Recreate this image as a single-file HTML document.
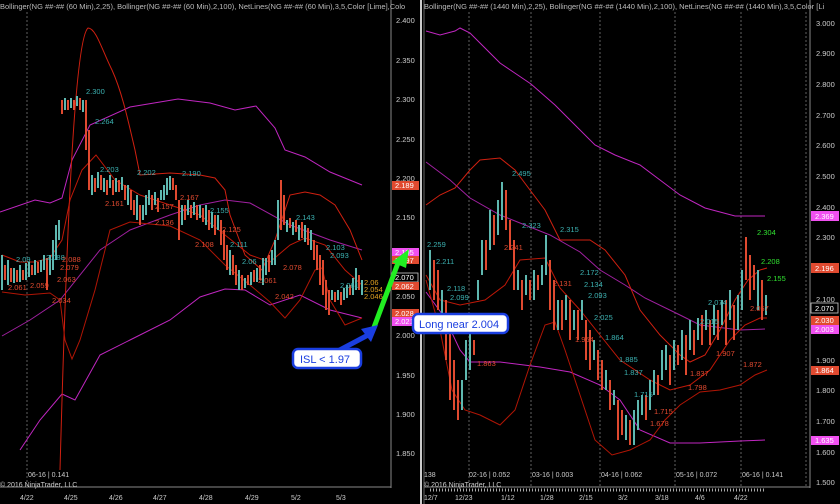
<!DOCTYPE html>
<html><head><meta charset="utf-8"><style>
html,body{margin:0;padding:0;background:#000;width:840px;height:504px;overflow:hidden}
svg{display:block}
text{font-family:"Liberation Sans",sans-serif}
</style></head><body>
<svg width="840" height="504" viewBox="0 0 840 504" xmlns="http://www.w3.org/2000/svg">
<rect width="840" height="504" fill="#000"/>
<text x="0" y="9" font-size="7.5" fill="#bbb">Bollinger(NG ##-## (60 Min),2,25), Bollinger(NG ##-## (60 Min),2,100), NetLines(NG ##-## (60 Min),3,5,Color [Lime],Colo</text>
<text x="424" y="9" font-size="7.5" fill="#bbb">Bollinger(NG ##-## (1440 Min),2,25), Bollinger(NG ##-## (1440 Min),2,100), NetLines(NG ##-## (1440 Min),3,5,Color [Li</text>
<g stroke="#777" stroke-dasharray="2,2" stroke-width="0.8">
<line x1="27" y1="12" x2="27" y2="486"/>
<line x1="469" y1="12" x2="469" y2="486"/><line x1="531" y1="12" x2="531" y2="486"/>
<line x1="600" y1="12" x2="600" y2="486"/><line x1="675" y1="12" x2="675" y2="486"/>
<line x1="741" y1="12" x2="741" y2="486"/><line x1="806" y1="12" x2="806" y2="486"/>
</g>
<g stroke="#888" stroke-width="1">
<line x1="391" y1="0" x2="391" y2="488"/><line x1="0" y1="487" x2="391" y2="487"/>
<line x1="810" y1="0" x2="810" y2="488"/><line x1="424" y1="487" x2="810" y2="487"/>
</g>
<line x1="421" y1="0" x2="421" y2="504" stroke="#ccc" stroke-width="2"/>
<line x1="424" y1="0" x2="424" y2="504" stroke="#666" stroke-width="1"/>
<g font-size="7.5" fill="#ccc">
<text x="396" y="23">2.400</text><text x="396" y="63">2.350</text><text x="396" y="102">2.300</text>
<text x="396" y="142">2.250</text><text x="396" y="181">2.200</text><text x="396" y="220">2.150</text>
<text x="396" y="299">2.050</text><text x="396" y="338">2.000</text><text x="396" y="378">1.950</text>
<text x="396" y="417">1.900</text><text x="396" y="456">1.850</text>
<text x="816" y="26">3.000</text><text x="816" y="56">2.900</text><text x="816" y="87">2.800</text>
<text x="816" y="118">2.700</text><text x="816" y="148">2.600</text><text x="816" y="179">2.500</text>
<text x="816" y="210">2.400</text><text x="816" y="240">2.300</text><text x="816" y="302">2.100</text>
<text x="816" y="363">1.900</text><text x="816" y="393">1.800</text><text x="816" y="424">1.700</text>
<text x="816" y="455">1.600</text><text x="816" y="485">1.500</text>
</g>
<g font-size="7" fill="#ccc">
<text x="20" y="500">4/22</text><text x="64" y="500">4/25</text><text x="109" y="500">4/26</text>
<text x="153" y="500">4/27</text><text x="199" y="500">4/28</text><text x="245" y="500">4/29</text>
<text x="291" y="500">5/2</text><text x="336" y="500">5/3</text>
<text x="424" y="500">12/7</text><text x="455" y="500">12/23</text><text x="501" y="500">1/12</text>
<text x="540" y="500">1/28</text><text x="579" y="500">2/15</text><text x="618" y="500">3/2</text>
<text x="655" y="500">3/18</text><text x="695" y="500">4/6</text><text x="734" y="500">4/22</text>
<text x="28" y="477">06-16 | 0.141</text><text x="0" y="487">© 2016 NinjaTrader, LLC</text>
<text x="424" y="477">138</text><text x="469" y="477">02-16 | 0.052</text><text x="532" y="477">03-16 | 0.003</text>
<text x="601" y="477">04-16 | 0.062</text><text x="676" y="477">05-16 | 0.072</text><text x="742" y="477">06-16 | 0.141</text>
<text x="424" y="487">© 2016 NinjaTrader, LLC</text>
</g>
<line x1="430" y1="490" x2="765" y2="490" stroke="#aaa" stroke-width="3" stroke-dasharray="1,2"/>
<!-- LEFT bands -->
<g fill="none" stroke-width="1">
<path d="M0,212 L35,200 L50,203 L62,198 L72,160 L90,125 L130,107 L178,99 L210,103 L235,110 L256,106 L275,128 L285,150 L305,157 L330,172 L362,185" stroke="#c026c0"/>
<path d="M2,336 L30,320 L60,300 L100,250 L130,230 L170,215 L200,205 L225,200 L250,203 L290,225 L330,240 L362,250" stroke="#a020a0"/>
<path d="M20,450 L40,420 L62,394 L75,400 L100,355 L130,340 L170,320 L200,297 L225,289 L245,290 L270,305 L300,295 L330,310 L362,318" stroke="#c026c0"/>
<path d="M60,470 C66,250 74,40 88,28 C96,28 102,50 112,70 C122,92 128,120 135,150 L140,175 L170,173 L200,175 L215,178 L225,190 L230,215 L245,255 L262,270 L275,240 L290,195 L305,192 L320,195 L335,205 L350,230 L362,260" stroke="#d02010"/>
<path d="M2,255 L20,262 L35,262 L50,258 L62,240 L70,200 L82,170 L96,155 L115,180 L140,195 L170,205 L200,215 L225,235 L250,255 L270,262 L290,245 L305,238 L325,245 L345,270 L362,285" stroke="#c01808"/>
<path d="M2,292 L25,295 L50,293 L60,300 L65,340 L72,359 L80,340 L95,290 L110,230 L130,222 L170,226 L200,240 L225,265 L250,285 L270,302 L285,318 L300,300 L315,270 L322,268 L330,300 L345,325 L362,318" stroke="#b01505"/>
</g>
<!-- LEFT candles -->
<g stroke-width="2">
<path stroke="#5fb8b0" d="M2,255v35M8,260v25M14,268v15M20,265v17M26,263v17M29,262v15M35,260v15M41,260v12M44,255v15M50,255v20M53,240v30M56,225v35M59,220v20M65,98v12M71,98v10M77,96v10M83,100v12M92,175v20M98,172v16M104,178v14M110,175v13M116,178v14M122,177v13M128,185v20M137,195v25M143,205v15M146,195v20M149,190v15M155,192v13M161,190v10M164,185v15M167,178v17M170,176v14M182,205v20M188,200v15M194,202v13M200,205v13M206,205v20M212,212v16M218,215v15M230,250v25M239,270v20M245,278v10M251,272v13M257,268v14M263,258v27M266,258v17M272,250v15M275,240v25M278,200v40M287,220v12M293,222v13M299,225v15M305,225v17M311,230v20M332,290v10M338,290v10M344,288v12M347,285v13M353,278v17M356,268v22M362,280v15"/>
<path stroke="#e04a30" d="M5,265v15M11,268v14M17,270v12M23,270v10M32,265v10M38,262v11M47,258v32M62,100v14M68,100v10M74,100v10M80,98v12M86,100v50M89,130v60M95,178v14M101,175v15M107,180v15M113,180v15M119,180v12M125,185v15M131,190v20M134,200v15M140,205v20M152,195v15M158,198v14M173,178v12M176,185v15M179,200v40M185,205v15M191,205v13M197,205v15M203,208v14M209,210v20M215,215v20M221,220v25M224,230v30M227,245v25M233,255v20M236,265v20M242,275v15M248,275v10M254,270v12M260,265v15M269,255v17M281,180v50M284,195v30M290,218v10M296,220v12M302,222v16M308,228v17M314,240v20M317,245v25M320,255v30M323,260v35M326,280v30M329,290v25M335,292v10M341,292v13M350,285v10M359,275v15"/>
</g>
<g font-size="7.5">
<g fill="#3bb0b0"><text x="86" y="94">2.300</text><text x="95" y="124">2.264</text><text x="100" y="172">2.203</text><text x="137" y="175">2.202</text><text x="182" y="176">2.190</text><text x="210" y="213">2.155</text><text x="230" y="247">2.111</text><text x="296" y="220">2.143</text><text x="326" y="250">2.103</text><text x="330" y="258">2.093</text><text x="16" y="262">2.09</text><text x="46" y="260">2.088</text><text x="242" y="264">2.06</text><text x="340" y="288">2.061</text></g>
<g fill="#e04a30"><text x="105" y="206">2.161</text><text x="195" y="247">2.108</text><text x="222" y="232">2.125</text><text x="283" y="270">2.078</text><text x="62" y="262">2.088</text><text x="60" y="270">2.079</text><text x="30" y="288">2.059</text><text x="52" y="303">2.034</text><text x="8" y="290">2.061</text><text x="57" y="282">2.063</text><text x="275" y="299">2.042</text><text x="258" y="283">2.061</text><text x="155" y="225">2.136</text><text x="155" y="209">2.157</text><text x="180" y="200">2.167</text></g>
<g fill="#e0a020"><text x="364" y="285">2.06</text><text x="364" y="292">2.054</text><text x="364" y="299">2.046</text></g>
</g>
<!-- RIGHT bands -->
<g fill="none" stroke-width="1">
<path d="M426,31 L440,35 L455,31 L460,28 L470,33 L485,48 L500,63 L531,84 L555,105 L575,125 L595,145 L615,155 L640,165 L660,180 L680,195 L705,208 L735,216 L765,216" stroke="#c026c0"/>
<path d="M426,162 L450,180 L470,198 L500,215 L550,235 L580,252 L600,270 L625,285 L645,298 L680,315 L700,325 L740,330 L765,329" stroke="#a020a0"/>
<path d="M426,292 L445,318 L460,350 L470,362 L500,362 L540,367 L570,372 L600,385 L620,400 L640,430 L670,443 L700,443 L740,441 L765,440" stroke="#c026c0"/>
<path d="M426,205 L440,195 L455,188 L470,170 L480,160 L500,158 L515,170 L530,190 L545,210 L560,240 L575,240 L590,240 L605,250 L625,275 L640,310 L660,335 L680,355 L690,362 L705,355 L720,330 L735,300 L748,280 L760,270 L767,268" stroke="#d02010"/>
<path d="M426,275 L440,300 L460,305 L485,300 L505,285 L520,260 L545,258 L560,288 L580,310 L600,335 L620,360 L650,380 L670,390 L690,385 L710,370 L730,340 L745,325 L760,318 L767,318" stroke="#c01808"/>
<path d="M426,280 L440,330 L452,390 L465,410 L480,415 L500,425 L515,410 L530,365 L545,325 L555,322 L565,350 L580,395 L595,440 L612,455 L630,450 L650,440 L665,420 L680,405 L700,392 L720,390 L740,385 L755,375 L767,370" stroke="#b01505"/>
</g>
<!-- RIGHT candles -->
<g stroke-width="2">
<path stroke="#5fb8b0" d="M430,250v40M442,290v40M462,380v30M466,340v40M470,330v40M478,280v20M482,240v35M490,210v40M498,200v35M502,182v38M518,270v20M526,275v20M534,270v30M542,265v20M546,235v40M558,300v30M566,295v25M574,310v20M582,300v20M594,340v20M606,370v20M614,390v15M626,415v25M634,410v35M638,400v30M642,395v20M650,380v30M654,370v25M662,350v30M666,345v25M674,340v30M682,330v30M690,320v30M698,318v22M706,310v20M714,305v30M722,300v25M730,290v30M738,295v35M742,270v40M758,270v40M766,295v20"/>
<path stroke="#e04a30" d="M434,260v40M438,270v40M446,300v60M450,330v70M454,360v50M458,380v40M474,340v15M486,240v30M494,215v30M506,190v40M510,220v30M514,240v50M522,280v30M530,280v20M538,275v15M550,260v50M554,280v50M562,300v30M570,300v40M578,310v30M586,320v40M590,330v40M598,350v30M602,360v30M610,380v30M618,400v40M622,410v25M630,420v25M646,395v25M658,375v20M670,355v30M678,345v20M686,335v40M694,330v25M702,315v30M710,320v25M718,310v30M726,300v45M734,305v35M746,237v43M750,255v45M754,265v25M762,280v40"/>
</g>
<g font-size="7.5">
<g fill="#3bb0b0"><text x="512" y="176">2.495</text><text x="427" y="247">2.259</text><text x="436" y="264">2.211</text><text x="560" y="232">2.315</text><text x="522" y="228">2.323</text><text x="580" y="275">2.172</text><text x="584" y="287">2.134</text><text x="588" y="298">2.093</text><text x="594" y="320">2.025</text><text x="708" y="305">2.074</text><text x="447" y="291">2.118</text><text x="450" y="300">2.099</text><text x="619" y="362">1.885</text><text x="624" y="375">1.837</text><text x="700" y="324">2.015</text><text x="605" y="340">1.864</text><text x="634" y="397">1.715</text></g>
<g fill="#e04a30"><text x="553" y="286">2.131</text><text x="504" y="250">2.241</text><text x="575" y="342">1.954</text><text x="716" y="356">1.907</text><text x="654" y="414">1.715</text><text x="650" y="426">1.678</text><text x="743" y="367">1.872</text><text x="690" y="376">1.837</text><text x="688" y="390">1.798</text><text x="750" y="311">2.057</text><text x="477" y="366">1.863</text></g>
<g fill="#30e030"><text x="757" y="235">2.304</text><text x="761" y="264">2.208</text><text x="767" y="281">2.155</text></g>
</g>
<!-- axis tags -->
<g font-size="7.5">
<rect x="392" y="181" width="27" height="9" fill="#e04a30"/><text x="395" y="188" fill="#fff">2.189</text>
<rect x="392" y="248" width="27" height="9" fill="#f050f0"/><text x="395" y="255" fill="#fff">2.105</text>
<rect x="392" y="256" width="27" height="8" fill="#e04a30"/><text x="395" y="263" fill="#fff">2.097</text>
<rect x="392" y="273" width="26" height="9" fill="#000" stroke="#ccc" stroke-width="0.8"/><text x="395" y="280" fill="#fff">2.070</text>
<rect x="392" y="282" width="27" height="8" fill="#e04a30"/><text x="395" y="289" fill="#fff">2.062</text>
<rect x="392" y="309" width="27" height="8" fill="#e04a30"/><text x="395" y="316" fill="#fff">2.028</text>
<rect x="392" y="317" width="27" height="9" fill="#f050f0"/><text x="395" y="324" fill="#fff">2.021</text>
<rect x="811" y="211" width="28" height="10" fill="#f050f0"/><text x="815" y="219" fill="#fff">2.369</text>
<rect x="811" y="263" width="28" height="10" fill="#e04a30"/><text x="815" y="271" fill="#fff">2.196</text>
<rect x="811" y="303" width="27" height="10" fill="#000" stroke="#ccc" stroke-width="0.8"/><text x="815" y="311" fill="#fff">2.070</text>
<rect x="811" y="316" width="28" height="9" fill="#e04a30"/><text x="815" y="323" fill="#fff">2.030</text>
<rect x="811" y="325" width="28" height="9" fill="#f050f0"/><text x="815" y="332" fill="#fff">2.003</text>
<rect x="811" y="366" width="28" height="9" fill="#e04a30"/><text x="815" y="373" fill="#fff">1.864</text>
<rect x="811" y="436" width="28" height="9" fill="#f050f0"/><text x="815" y="443" fill="#fff">1.635</text>
</g>
<line x1="373" y1="330" x2="398" y2="263" stroke="#22ee22" stroke-width="5" stroke-linecap="round"/>
<polygon points="409,249 392,262 406,268" fill="#22ee22"/>
<line x1="336" y1="352" x2="370" y2="334" stroke="#1a3ee0" stroke-width="5" stroke-linecap="round"/>
<polygon points="378,325 361,329 371,342" fill="#1a3ee0"/>
<rect x="293" y="349" width="68" height="19" rx="5" fill="#fff" stroke="#1a3ee0" stroke-width="2.5"/>
<text x="300" y="363" font-size="11" fill="#1a3ee0">ISL &lt; 1.97</text>
<rect x="413" y="314" width="95" height="19" rx="5" fill="#fff" stroke="#1a3ee0" stroke-width="2.5"/>
<text x="419" y="328" font-size="11" fill="#1a3ee0">Long near 2.004</text>
</svg>
</body></html>
